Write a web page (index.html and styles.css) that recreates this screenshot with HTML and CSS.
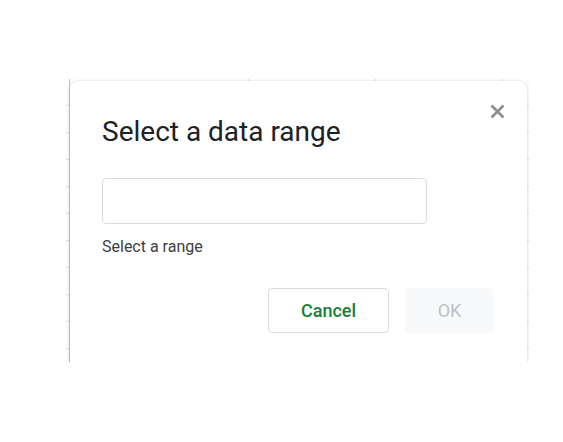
FILE: index.html
```html
<!DOCTYPE html>
<html>
<head>
<meta charset="utf-8">
<link rel="stylesheet" href="styles.css">
</head>
<body>
<div class="stage">
  <div class="sheet">
    <div class="dialog">
      <div class="header">
        <h1 class="title">Select a data range</h1>
        <button class="close" aria-label="Close">
          <svg width="15" height="15" viewBox="0 0 15 15"><path d="M1.5 1.5 L13.5 13.5 M13.5 1.5 L1.5 13.5" stroke="#8e8e8e" stroke-width="2.6" fill="none"/></svg>
        </button>
      </div>
      <div class="field"></div>
      <div class="hint">Select a range</div>
      <div class="actions">
        <button class="btn cancel">Cancel</button>
        <button class="btn ok">OK</button>
      </div>
    </div>
  </div>
</div>
</body>
</html>
```
FILE: styles.css
```css
html, body {
  margin: 0;
  background: #ffffff;
}
.stage {
  padding: 79px 0 0 66px;
}
.sheet {
  width: 463px;
  height: 283px;
  overflow: hidden;
  background-color: #ffffff;
  background-image:
    linear-gradient(to right, transparent 3px, #c4c4c4 3px, #c4c4c4 4px, transparent 4px),
    repeating-linear-gradient(to right, transparent 0, transparent 126px, #e0e0e0 126px, #e0e0e0 127px),
    repeating-linear-gradient(to bottom, transparent 0, transparent 26px, #e0e0e0 26px, #e0e0e0 27px);
  background-position: 0 0, 56px 0, 0 0;
}
.dialog {
  margin: 2px 0 0 4px;
  width: 457px;
  box-sizing: border-box;
  height: 340px;
  background: #ffffff;
  border-radius: 8px;
  box-shadow: 0 0 2px rgba(60, 64, 67, 0.2), 0 2px 6px 1px rgba(60, 64, 67, 0.1);
  padding: 33px 33px 0 32px;
  font-family: Roboto, "Liberation Sans", sans-serif;
}
.header {
  display: flex;
  justify-content: space-between;
  align-items: flex-start;
}
.title {
  margin: 0;
  font-size: 28px;
  line-height: 36px;
  font-weight: 400;
  color: #202124;
}
.close {
  margin: -10px -11px 0 0;
  padding: 0;
  border: 0;
  background: none;
  width: 15px;
  height: 15px;
  display: flex;
}
.field {
  margin-top: 28px;
  width: 325px;
  height: 46px;
  box-sizing: border-box;
  border: 1px solid #dadce0;
  border-radius: 4px;
}
.hint {
  margin-top: 13px;
  font-size: 16px;
  line-height: 20px;
  color: #3c4043;
}
.actions {
  margin-top: 31px;
  display: flex;
  justify-content: flex-end;
  gap: 16px;
}
.btn {
  height: 45px;
  box-sizing: border-box;
  border-radius: 4px;
  font-family: Roboto, "Liberation Sans", sans-serif;
  font-size: 18px;
  font-weight: 500;
  padding: 0;
}
.cancel {
  width: 121px;
  background: #ffffff;
  border: 1px solid #dadce0;
  color: #188038;
}
.ok {
  width: 89px;
  background: #f8f9fa;
  border: 0;
  color: #bdc1c6;
  font-weight: 400;
}
```
